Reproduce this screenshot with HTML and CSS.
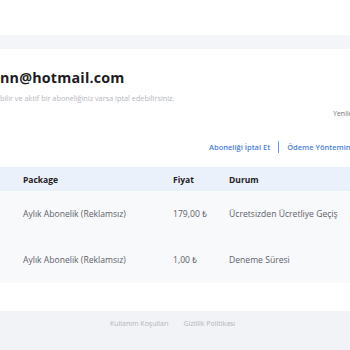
FILE: index.html
```html
<!DOCTYPE html>
<html lang="tr">
<head>
    <meta charset="UTF-8">
    <meta name="viewport" content="width=device-width, initial-scale=1.0">
    <title>Abonelik</title>
    <link rel="stylesheet" href="styles.css">
</head>
<body>

    <div class="topbar"></div>
    <div class="band"></div>

    <div class="account">
        <h1 class="email">nn@hotmail.com</h1>
        <p class="sub">bilir ve aktif bir aboneliğiniz varsa iptal edebilirsiniz.</p>
        <p class="renew">Yenileme Tarihi</p>
        <div class="actions">
            <a href="#">Aboneliği İptal Et</a>
            <span class="sep"></span>
            <a href="#">Ödeme Yöntemini Değiştir</a>
        </div>
    </div>

    <div class="table">
        <div class="row head">
            <div>Package</div>
            <div>Fiyat</div>
            <div>Durum</div>
        </div>
        <div class="row">
            <div>Aylık Abonelik (Reklamsız)</div>
            <div>179,00 ₺</div>
            <div>Ücretsizden Ücretliye Geçiş</div>
        </div>
        <div class="row">
            <div>Aylık Abonelik (Reklamsız)</div>
            <div>1,00 ₺</div>
            <div>Deneme Süresi</div>
        </div>
    </div>

    <footer>
        <a href="#">Kullanım Koşulları</a>
        <a href="#">Gizlilik Politikası</a>
    </footer>

</body>
</html>
```

FILE: styles.css
```css
body {
    margin: 0;
    font-family: "Open Sans", "Liberation Sans", sans-serif;
    background-color: #fff;
    color: #333;
    overflow: hidden;
    width: 350px;
    height: 350px;
}
.topbar {
    height: 35px;
}
.band {
    height: 14px;
    background-color: #f4f5f8;
}
.account {
    padding-top: 17px;
    white-space: nowrap;
}
.email {
    margin: 0;
    font-size: 14.3px;
    font-weight: 700;
    line-height: 24px;
    color: #1c1c1f;
    letter-spacing: 0.2px;
}
.sub {
    margin: 3px 0 0;
    font-size: 7.3px;
    line-height: 10px;
    color: #b4b6bd;
}
.renew {
    margin: 6px 0 0;
    padding-left: 333px;
    font-size: 7px;
    line-height: 10px;
    color: #6d7079;
}
.actions {
    display: flex;
    align-items: center;
    gap: 8px;
    padding-left: 209px;
    margin-top: 21px;
    height: 14px;
}
.actions > * {
    flex-shrink: 0;
}
.actions a {
    font-size: 7.5px;
    color: #4a7fd8;
    text-decoration: none;
    font-weight: 600;
}
.sep {
    width: 1px;
    height: 12px;
    background-color: #6f9be6;
}
.table {
    margin-top: 13px;
    width: 520px;
}
.row {
    display: grid;
    grid-template-columns: 150px 56px 1fr;
    align-items: center;
    padding-left: 23px;
    height: 46px;
    font-size: 8.6px;
    color: #5d6068;
    background-color: #f8f9fb;
    white-space: nowrap;
}
.row.head {
    height: 24px;
    background-color: #eaf1fa;
    font-size: 8.5px;
    font-weight: 700;
    color: #1f2024;
}
footer {
    margin-top: 28px;
    height: 40px;
    background-color: #f2f3f6;
    display: flex;
    gap: 15px;
    padding-left: 110px;
    padding-top: 8px;
    box-sizing: border-box;
}
footer a {
    font-size: 7px;
    color: #b2b4bb;
    text-decoration: none;
}
```
